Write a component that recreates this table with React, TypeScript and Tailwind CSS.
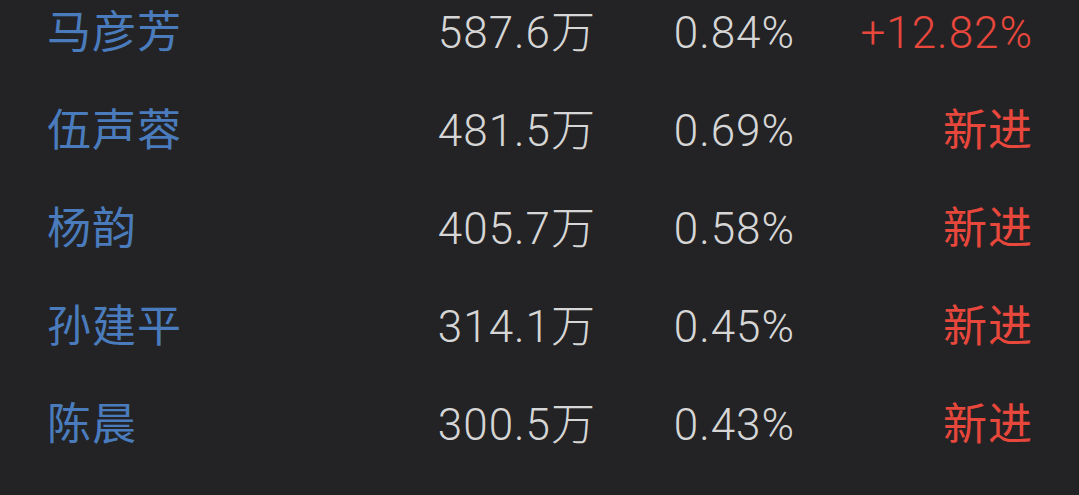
import React from "react";

const rows = [
  { name: "马彦芳", value: "587.6万", pct: "0.84%", change: "+12.82%", isNew: false },
  { name: "伍声蓉", value: "481.5万", pct: "0.69%", change: "新进", isNew: true },
  { name: "杨韵", value: "405.7万", pct: "0.58%", change: "新进", isNew: true },
  { name: "孙建平", value: "314.1万", pct: "0.45%", change: "新进", isNew: true },
  { name: "陈晨", value: "300.5万", pct: "0.43%", change: "新进", isNew: true },
];

export default function App() {
  return (
    <div
      className="w-[1079px] h-[495px] overflow-hidden bg-[#232325]"
      style={{ fontFamily: "Roboto, 'Noto Sans CJK SC', sans-serif" }}
    >
      <div className="-mt-[16px] flex flex-col">
        {rows.map((r) => (
          <div
            key={r.name}
            className="grid grid-cols-[260px_336px_199px_238px] h-[98px] items-center text-[44px] leading-none font-light tracking-[1px]"
          >
            <div className="pl-[47px] text-[#4a7cbd] font-normal">{r.name}</div>
            <div className="text-right text-[#d6d6d6]">{r.value}</div>
            <div className="text-right text-[#d6d6d6]">{r.pct}</div>
            <div className={r.isNew ? "text-right text-[#e8473c] font-normal" : "text-right text-[#e8473c]"}>
              {r.change}
            </div>
          </div>
        ))}
      </div>
    </div>
  );
}
